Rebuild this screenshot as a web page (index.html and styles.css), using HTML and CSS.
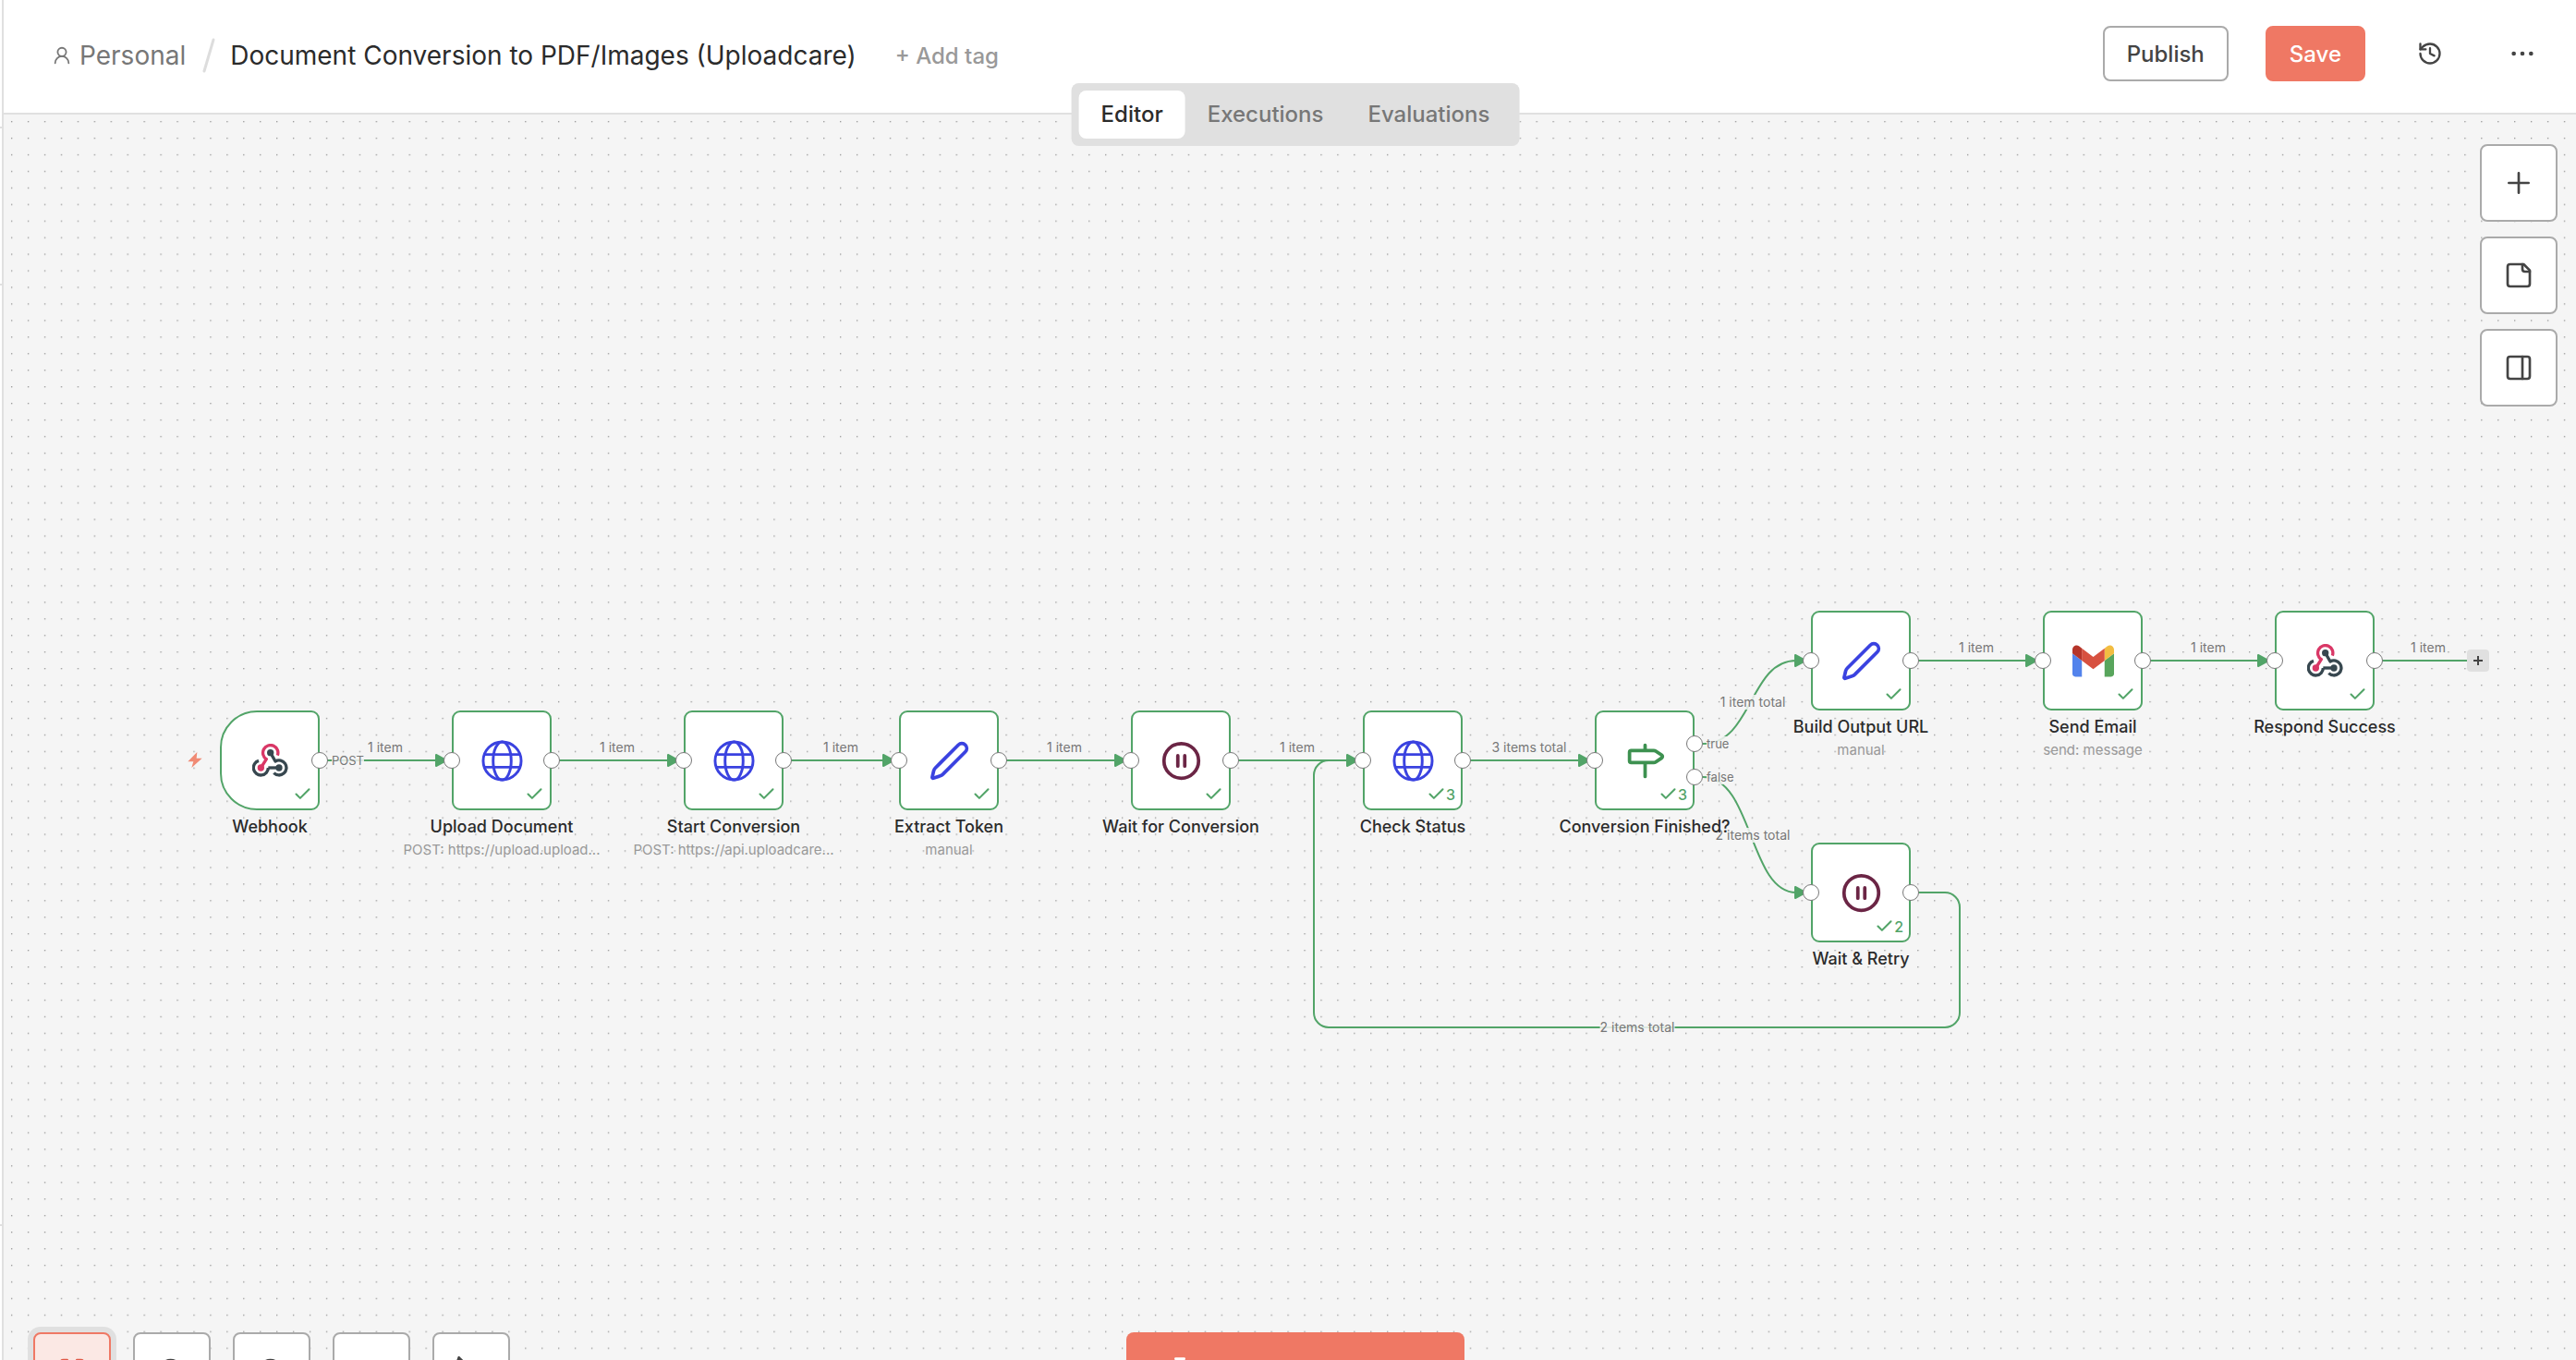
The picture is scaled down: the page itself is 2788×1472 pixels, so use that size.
FILE: index.html
```html
<!DOCTYPE html>
<html lang="en">

<head>
    <meta charset="utf-8">
    <title>Document Conversion to PDF/Images (Uploadcare)</title>
    <link rel="stylesheet" href="styles.css">
</head>

<body>
    <!-- shared icons -->
    <svg class="defs" aria-hidden="true">
        <symbol id="webhook" viewBox="0 0 117 108">
            <g fill="none" stroke-width="10">
                <path d="M52 78H87" stroke="#37474f" />
                <path d="M52 78A24 24 0 1 1 21 55" stroke="#37474f" />
                <path d="M59 29L75 57A24 24 0 1 1 70 95" stroke="#37474f" stroke-linejoin="round" />
                <path d="M82 38A24.500 24.500 0 1 0 46 50L28 78" stroke="#d93766" stroke-linejoin="round" />
            </g>
            <circle cx="59" cy="29" r="11" fill="#37474f" />
            <circle cx="87" cy="78" r="11" fill="#37474f" />
            <circle cx="28" cy="78" r="11" fill="#d93766" />
        </symbol>
        <symbol id="globe" viewBox="0 0 46 46">
            <g fill="none" stroke="#3a42e0" stroke-width="3">
                <circle cx="23" cy="23" r="21" />
                <ellipse cx="23" cy="23" rx="10" ry="21" />
                <path d="M3 16h40M3 30h40" />
            </g>
        </symbol>
        <symbol id="pencil" viewBox="0 0 24 24">
            <path d="M21.200 6.800a2.600 2.600 0 0 0-4-4L4 16a4 4 0 0 0-1 1.600L2.100 21.400a.5.5 0 0 0 .6.600l4-1.300a4 4 0 0 0 1.500-.9z" fill="none" stroke="#3a42e0" stroke-width="2" stroke-linecap="round" stroke-linejoin="round" />
        </symbol>
        <symbol id="pause" viewBox="0 0 24 24">
            <g fill="none" stroke="#6b2545" stroke-width="2" stroke-linecap="round">
                <circle cx="12" cy="12" r="10" />
                <path d="M10 9v6M14 9v6" />
            </g>
        </symbol>
        <symbol id="milestone" viewBox="0 0 24 24">
            <path d="M12 13v8M12 3v3M4 6a1 1 0 0 0-1 1v5a1 1 0 0 0 1 1h13a2 2 0 0 0 1.152-.365l3.424-2.317a1 1 0 0 0 0-1.635l-3.424-2.318A2 2 0 0 0 17 6z" fill="none" stroke="#3d9150" stroke-width="2" stroke-linecap="round" stroke-linejoin="round" />
        </symbol>
        <symbol id="gmail" viewBox="52 42 88 66">
            <path fill="#5383ec" d="M58 108h14V74L52 59v43c0 3.320 2.690 6 6 6" />
            <path fill="#58a55c" d="M120 108h14c3.320 0 6-2.690 6-6V59l-20 15" />
            <path fill="#f2bd42" d="M120 48v26l20-15v-8c0-7.420-8.470-11.650-14.400-7.200" />
            <path fill="#d75140" d="M72 74V48l24 18 24-18v26L96 92" />
            <path fill="#b5352a" d="M52 51v8l20 15V48l-5.600-4.200c-5.940-4.450-14.400-.22-14.400 7.200" />
        </symbol>
        <symbol id="check" viewBox="0 0 24 24">
            <path d="M20 6L9 17l-5-5" fill="none" stroke="currentColor" stroke-width="2.400" stroke-linecap="round" stroke-linejoin="round" />
        </symbol>
    </svg>

    <div class="app">
        <aside class="sidebar">
            <div class="head"></div>
            <div class="menu"></div>
            <div class="list"></div>
            <div class="foot"></div>
        </aside>
        <main class="main">
            <header class="header">
                <div class="crumbs">
                    <a class="owner" href="#">
                        <svg class="icon" viewBox="0 0 24 24"><circle cx="12" cy="8" r="5" /><path d="M20 21a8 8 0 0 0-16 0" /></svg>
                        Personal
                    </a>
                    <svg class="slash" viewBox="0 0 14 38"><path d="M12 2L2 36" /></svg>
                    <h1 class="title">Document Conversion to PDF/Images (Uploadcare)</h1>
                    <button class="add-tag">+ Add tag</button>
                </div>
                <div class="actions">
                    <button class="btn publish">Publish</button>
                    <button class="btn save">Save</button>
                    <button class="btn-icon" aria-label="History">
                        <svg class="icon" viewBox="0 0 24 24"><path d="M3 12a9 9 0 1 0 9-9 9.750 9.750 0 0 0-6.740 2.740L3 8" /><path d="M3 3v5h5M12 7v5l4 2" /></svg>
                    </button>
                    <button class="btn-icon" aria-label="More">
                        <svg class="icon dots" viewBox="0 0 24 24"><circle cx="4" cy="12" r="1" /><circle cx="12" cy="12" r="1" /><circle cx="20" cy="12" r="1" /></svg>
                    </button>
                </div>
                <nav class="tabs">
                    <a class="ac" href="#">Editor</a>
                    <a href="#">Executions</a>
                    <a href="#">Evaluations</a>
                </nav>
            </header>

            <section class="canvas">
                <svg class="edges">
                    <defs>
                        <pattern id="grid" width="16" height="16" patternUnits="userSpaceOnUse" patternTransform="translate(-1 -2) scale(1.1213)">
                            <rect x="8" y="8" width="1.200" height="1.200" fill="#999" />
                        </pattern>
                        <marker id="arrow" viewBox="0 0 14 16" refX="2" refY="8" markerWidth="14" markerHeight="16" markerUnits="userSpaceOnUse">
                            <path d="M1 2v12l11-6z" />
                        </marker>
                    </defs>
                    <rect width="100%" height="100%" fill="url(#grid)" />
                    <g class="lines">
                        <path d="M342 699H469" />
                        <path d="M593 699H720" />
                        <path d="M844 699H953" />
                        <path d="M1077 699H1204" />
                        <path d="M1328 699H1455" />
                        <path d="M1579 699H1706" />
                        <path d="M2064 591H2190" />
                        <path d="M2315 591H2441" />
                        <path d="M1839 681C1893 681 1889 591 1940 591" />
                        <path d="M1839 717C1893 717 1889 842 1940 842" />
                        <path class="plain" d="M2566 591H2666" />
                        <path class="plain" d="M2064 842H2101a16 16 0 0 1 16 16V972a16 16 0 0 1-16 16H1434a16 16 0 0 1-16-16V715a16 16 0 0 1 16-16h20" />
                    </g>
                </svg>

                <span class="label l1">1 item</span>
                <span class="label l2">1 item</span>
                <span class="label l3">1 item</span>
                <span class="label l4">1 item</span>
                <span class="label l5">1 item</span>
                <span class="label l6">3 items total</span>
                <span class="label l7">1 item total</span>
                <span class="label l8">2 items total</span>
                <span class="label l9">1 item</span>
                <span class="label l10">1 item</span>
                <span class="label l11">1 item</span>
                <span class="label l12">2 items total</span>

                <svg class="bolt" viewBox="0 0 46 51"><path d="M30 0L0 31h18l-6 20L46 20H28z" /></svg>

                <div class="node trigger n1">
                    <svg class="logo small"><use href="#webhook" /></svg>
                    <span class="status"><svg><use href="#check" /></svg></span>
                    <i class="port out"></i><span class="port-name">POST</span>
                    <div class="text"><b>Webhook</b></div>
                </div>
                <div class="node n2">
                    <svg class="logo"><use href="#globe" /></svg>
                    <span class="status"><svg><use href="#check" /></svg></span>
                    <i class="port in"></i><i class="port out"></i>
                    <div class="text"><b>Upload Document</b><small>POST: https://upload.upload...</small></div>
                </div>
                <div class="node n3">
                    <svg class="logo"><use href="#globe" /></svg>
                    <span class="status"><svg><use href="#check" /></svg></span>
                    <i class="port in"></i><i class="port out"></i>
                    <div class="text"><b>Start Conversion</b><small>POST: https://api.uploadcare...</small></div>
                </div>
                <div class="node n4">
                    <svg class="logo"><use href="#pencil" /></svg>
                    <span class="status"><svg><use href="#check" /></svg></span>
                    <i class="port in"></i><i class="port out"></i>
                    <div class="text"><b>Extract Token</b><small>manual</small></div>
                </div>
                <div class="node n5">
                    <svg class="logo"><use href="#pause" /></svg>
                    <span class="status"><svg><use href="#check" /></svg></span>
                    <i class="port in"></i><i class="port out"></i>
                    <div class="text"><b>Wait for Conversion</b></div>
                </div>
                <div class="node n6">
                    <svg class="logo"><use href="#globe" /></svg>
                    <span class="status"><svg><use href="#check" /></svg>3</span>
                    <i class="port in"></i><i class="port out"></i>
                    <div class="text"><b>Check Status</b></div>
                </div>
                <div class="node n7">
                    <svg class="logo"><use href="#milestone" /></svg>
                    <span class="status"><svg><use href="#check" /></svg>3</span>
                    <i class="port in"></i>
                    <i class="port out yes"></i><span class="port-name yes">true</span>
                    <i class="port out no"></i><span class="port-name no">false</span>
                    <div class="text"><b>Conversion Finished?</b></div>
                </div>
                <div class="node n8">
                    <svg class="logo"><use href="#pencil" /></svg>
                    <span class="status"><svg><use href="#check" /></svg></span>
                    <i class="port in"></i><i class="port out"></i>
                    <div class="text"><b>Build Output URL</b><small>manual</small></div>
                </div>
                <div class="node n9">
                    <svg class="logo"><use href="#gmail" /></svg>
                    <span class="status"><svg><use href="#check" /></svg></span>
                    <i class="port in"></i><i class="port out"></i>
                    <div class="text"><b>Send Email</b><small>send: message</small></div>
                </div>
                <div class="node n10">
                    <svg class="logo small"><use href="#webhook" /></svg>
                    <span class="status"><svg><use href="#check" /></svg></span>
                    <i class="port in"></i><i class="port out"></i>
                    <div class="text"><b>Respond Success</b></div>
                </div>
                <div class="node n11">
                    <svg class="logo"><use href="#pause" /></svg>
                    <span class="status"><svg><use href="#check" /></svg>2</span>
                    <i class="port in"></i><i class="port out"></i>
                    <div class="text"><b>Wait &amp; Retry</b></div>
                </div>
                <button class="plus" aria-label="Add next node">
                    <svg viewBox="0 0 12 12"><path d="M6 1v10M1 6h10" /></svg>
                </button>

                <div class="tools side">
                    <button aria-label="Add node"><svg class="icon" viewBox="0 0 24 24"><path d="M4 12h16M12 4v16" /></svg></button>
                    <button aria-label="Add sticky note"><svg class="icon" viewBox="0 0 24 24"><path d="M16 3H5a2 2 0 0 0-2 2v14a2 2 0 0 0 2 2h14a2 2 0 0 0 2-2V8z" /><path d="M15 3v4a2 2 0 0 0 2 2h4" /></svg></button>
                    <button aria-label="Open panel"><svg class="icon" viewBox="0 0 24 24"><rect x="3" y="3" width="18" height="18" rx="2" /><path d="M15 3v18" /></svg></button>
                </div>

                <div class="tools bottom">
                    <button class="ac" aria-label="Zoom to fit"><svg class="icon" viewBox="0 0 24 24"><path d="M8 3H5a2 2 0 0 0-2 2v3M21 8V5a2 2 0 0 0-2-2h-3M3 16v3a2 2 0 0 0 2 2h3M16 21h3a2 2 0 0 0 2-2v-3" /></svg></button>
                    <button aria-label="Zoom in"><svg class="icon" viewBox="0 0 24 24"><circle cx="11" cy="11" r="8" /><path d="M21 21l-4-4M11 8v6M8 11h6" /></svg></button>
                    <button aria-label="Zoom out"><svg class="icon" viewBox="0 0 24 24"><circle cx="11" cy="11" r="8" /><path d="M21 21l-4-4M8 11h6" /></svg></button>
                    <button aria-label="Reset zoom"><svg class="icon" viewBox="0 0 24 24"><path d="M9 14L4 9l5-5" /><path d="M4 9h10a5 5 0 0 1 0 11h-3" /></svg></button>
                    <button aria-label="Tidy up"><svg class="icon" viewBox="0 0 24 24"><path d="M2 1l9 9M2 1l-1 3M9 8l10 3-8 10-5-8z" /></svg></button>
                </div>

                <div class="run">
                    <button aria-label="Execute workflow"><svg class="icon" viewBox="0 0 24 24"><path d="M14 2v6a2 2 0 0 0 .25 1l5.500 10a2 2 0 0 1-1.750 3H6a2 2 0 0 1-1.750-3l5.500-10A2 2 0 0 0 10 8V2M8.500 2h7M7 16h10" /></svg></button>
                </div>
            </section>
        </main>
    </div>
</body>

</html>
```
FILE: styles.css
```css
* {
    margin: 0;
    padding: 0;
    box-sizing: border-box;
}

body {
    font-family: Inter, "Liberation Sans", sans-serif;
    color: #2b2b2b;
    overflow: hidden;
}

a {
    color: inherit;
    text-decoration: none;
}

button {
    font-family: inherit;
    cursor: pointer;
}

.defs {
    position: absolute;
    width: 0;
    height: 0;
}

.icon {
    display: block;
    fill: none;
    stroke: currentColor;
    stroke-width: 2;
    stroke-linecap: round;
    stroke-linejoin: round;
}

.app {
    display: flex;
    height: 100vh;
}

/* collapsed sidebar, only its edge shows */

.sidebar {
    display: flex;
    flex-direction: column;
    width: 4px;
    background: #fff;
    border-right: 2px solid #e0e0e0;
}

.sidebar div {
    border-bottom: 2px solid #e0e0e0;
}

.sidebar .head {
    height: 139px;
}

.sidebar .menu {
    height: 170px;
}

.sidebar .list {
    flex: 1;
}

.sidebar .foot {
    height: 145px;
    border-bottom: 0;
}

.main {
    flex: 1;
    min-width: 0;
    display: flex;
    flex-direction: column;
}

/* header */

.header {
    position: relative;
    z-index: 10;
    display: flex;
    align-items: center;
    height: 124px;
    padding: 0 28px 6px 52px;
    background: #fff;
    border-bottom: 2px solid #e0e0e0;
}

.crumbs {
    display: flex;
    align-items: center;
    padding-top: 4px;
}

.owner {
    display: flex;
    align-items: center;
    gap: 8px;
    font-size: 28px;
    line-height: 36px;
    color: #777;
}

.owner .icon {
    width: 22px;
    height: 22px;
}

.slash {
    width: 14px;
    height: 38px;
    margin: 0 16px 0 18px;
    fill: none;
    stroke: #ddd;
    stroke-width: 3;
    stroke-linecap: round;
}

.title {
    font-size: 28px;
    font-weight: 400;
    line-height: 36px;
}

.add-tag {
    margin-left: 42px;
    border: 0;
    background: none;
    font-size: 24px;
    font-weight: 500;
    color: #999;
}

.actions {
    display: flex;
    align-items: center;
    gap: 40px;
    margin-left: auto;
}

.btn {
    height: 60px;
    padding: 0 24px;
    border: 2px solid #aaa;
    border-radius: 8px;
    background: #fff;
    font-size: 24px;
    font-weight: 500;
    color: #444;
}

.save {
    border-color: #ef7864;
    background: #ef7864;
    color: #fff;
}

.btn-icon {
    display: flex;
    align-items: center;
    justify-content: center;
    width: 60px;
    height: 60px;
    border: 0;
    background: none;
    color: #444;
}

.btn-icon .icon {
    width: 28px;
    height: 28px;
}

.btn-icon .dots {
    fill: currentColor;
}

.tabs {
    position: absolute;
    top: 90px;
    left: 50%;
    display: flex;
    margin-left: 6px;
    padding: 8px;
    border-radius: 8px;
    background: #e0e0e0;
    transform: translateX(-50%);
}

.tabs a {
    padding: 0 24px;
    border-radius: 8px;
    font-size: 24px;
    font-weight: 500;
    line-height: 52px;
    color: #777;
}

.tabs a.ac {
    background: #fff;
    color: #2b2b2b;
}

/* canvas */

.canvas {
    flex: 1;
    position: relative;
    overflow: hidden;
    background: #f5f5f5;
}

.edges {
    position: absolute;
    left: 0;
    top: 0;
    width: 100%;
    height: 100%;
}

.lines path {
    fill: none;
    stroke: #52a468;
    stroke-width: 2;
    marker-end: url(#arrow);
}

.lines .plain {
    marker-end: none;
}

#arrow path {
    fill: #52a468;
    stroke: #52a468;
    stroke-width: 2;
    stroke-linejoin: round;
}

.label,
.port-name {
    position: absolute;
    font-size: 14px;
    line-height: 16px;
    color: #777;
    white-space: nowrap;
    background: rgba(245, 245, 245, 0.85);
}

.label {
    transform: translate(-50%, -50%);
}

.l1 { left: 413px; top: 685px; }
.l2 { left: 664px; top: 685px; }
.l3 { left: 906px; top: 685px; }
.l4 { left: 1148px; top: 685px; }
.l5 { left: 1400px; top: 685px; }
.l6 { left: 1651px; top: 685px; }
.l7 { left: 1893px; top: 636px; }
.l8 { left: 1893px; top: 780px; }
.l9 { left: 2135px; top: 577px; }
.l10 { left: 2386px; top: 577px; }
.l11 { left: 2624px; top: 577px; }
.l12 { left: 1768px; top: 988px; }

.bolt {
    position: absolute;
    left: 199px;
    top: 690px;
    width: 16px;
    height: 17px;
    fill: #f08a74;
}

.node {
    position: absolute;
    display: flex;
    align-items: center;
    justify-content: center;
    width: 108px;
    height: 108px;
    border: 2px solid #52a468;
    border-radius: 9px;
    background: #fff;
}

.trigger {
    border-radius: 40px 9px 9px 40px;
}

.n1 { left: 234px; top: 645px; }
.n2 { left: 485px; top: 645px; }
.n3 { left: 736px; top: 645px; }
.n4 { left: 969px; top: 645px; }
.n5 { left: 1220px; top: 645px; }
.n6 { left: 1471px; top: 645px; }
.n7 { left: 1722px; top: 645px; }
.n8 { left: 1956px; top: 537px; }
.n9 { left: 2207px; top: 537px; }
.n10 { left: 2458px; top: 537px; }
.n11 { left: 1956px; top: 788px; }

.logo {
    width: 45px;
    height: 45px;
}

.logo.small {
    width: 39px;
    height: 36px;
}

.status {
    position: absolute;
    right: 6px;
    bottom: 5px;
    display: flex;
    align-items: center;
    font-size: 16px;
    font-weight: 500;
    line-height: 20px;
    color: #52a468;
}

.status svg {
    width: 21px;
    height: 21px;
}

.port {
    position: absolute;
    top: 43px;
    width: 18px;
    height: 18px;
    border: 1px solid #777;
    border-radius: 50%;
    background: #fff;
}

.port.in {
    left: -11px;
}

.port.out {
    right: -11px;
}

.port-name {
    left: 119px;
    top: 44px;
    font-size: 13px;
}

.port.yes { top: 25px; }
.port.no { top: 61px; }
.port-name.yes { top: 26px; }
.port-name.no { top: 62px; }

.text {
    position: absolute;
    top: 112px;
    left: 50%;
    text-align: center;
    white-space: nowrap;
    transform: translateX(-50%);
}

.text b {
    display: block;
    font-size: 18px;
    font-weight: 500;
    line-height: 24px;
}

.text small {
    display: block;
    margin-top: 3px;
    font-size: 15px;
    line-height: 20px;
    color: #999;
}

.plus {
    position: absolute;
    left: 2666px;
    top: 579px;
    display: flex;
    align-items: center;
    justify-content: center;
    width: 24px;
    height: 24px;
    border: 0;
    border-radius: 4px;
    background: #e0e0e0;
}

.plus svg {
    width: 12px;
    height: 12px;
    stroke: #444;
    stroke-width: 2;
}

.tools {
    position: absolute;
    display: flex;
}

.tools button {
    display: flex;
    align-items: center;
    justify-content: center;
    width: 84px;
    height: 84px;
    border: 2px solid #aaa;
    border-radius: 8px;
    background: #fff;
    color: #444;
}

.tools .icon,
.run .icon {
    width: 32px;
    height: 32px;
}

.side {
    top: 32px;
    right: 20px;
    flex-direction: column;
    gap: 16px;
}

/* bottom bars run off the lower edge */

.bottom {
    left: 32px;
    bottom: -54px;
    gap: 24px;
}

.tools button.ac {
    border-color: #ef7864;
    background: #fbe8e4;
    color: #e05a48;
    box-shadow: 0 0 0 6px #e0e0e0;
}

.run {
    position: absolute;
    left: 0;
    right: 0;
    bottom: -54px;
    display: flex;
    justify-content: center;
    padding-left: 12px;
    pointer-events: none;
}

.run button {
    width: 366px;
    height: 84px;
    padding-left: 42px;
    border: 0;
    border-radius: 8px;
    background: #ef7864;
    color: #fff;
    pointer-events: auto;
}
```
